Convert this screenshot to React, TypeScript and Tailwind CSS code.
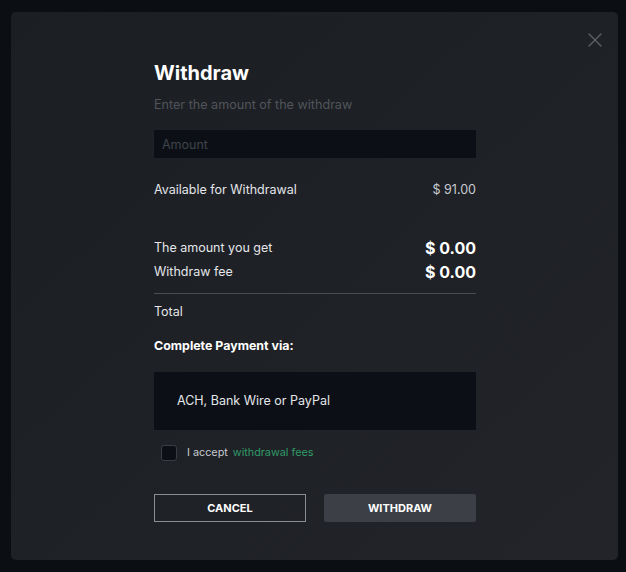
import { X } from "lucide-react";

const Row = ({ label, value, big }: { label: string; value: string; big?: boolean }) => (
  <div className="flex h-[20px] items-center justify-between">
    <span className="text-[12.5px] leading-[20px] text-[#e4e6ea]">{label}</span>
    <span className={big ? "text-[16px] font-bold leading-[20px] text-white" : "text-[12.5px] leading-[20px] text-[#c9ccd1]"}>
      {value}
    </span>
  </div>
);

export default function App() {
  return (
    <div
      className="min-h-[572px] w-full bg-[#0b0f14] pl-[11px] pr-[8px] pt-[12px] pb-[12px]"
      style={{ fontFamily: "Inter, Roboto, 'Liberation Sans', sans-serif" }}
    >
      <div className="relative h-[548px] rounded-[5px] bg-gradient-to-br from-[#1b1e22] to-[#222429]">
        <button className="absolute right-[11px] top-[16px] text-[#5c5f64]">
          <X className="size-[24px]" strokeWidth={1.4} />
        </button>

        <div className="ml-[143px] flex w-[322px] flex-col pt-[49px]">
          <h1 className="text-[20px] font-bold leading-[24px] text-white">Withdraw</h1>
          <p className="mt-[12px] text-[12.6px] leading-[16px] text-[#51555b]">Enter the amount of the withdraw</p>

          <input
            placeholder="Amount"
            className="mt-[17px] h-[28px] w-full bg-[#0c1016] px-[8px] text-[12.5px] text-white placeholder:text-[#3f434a] outline-none"
          />

          <div className="mt-[22px]">
            <Row label="Available for Withdrawal" value="$ 91.00" />
          </div>

          <div className="mt-[38px] flex flex-col gap-[4px]">
            <Row label="The amount you get" value="$ 0.00" big />
            <Row label="Withdraw fee" value="$ 0.00" big />
          </div>

          <div className="mt-[11px] h-px bg-[#4a4d52]" />

          <div className="mt-[8px] text-[12.5px] leading-[20px] text-[#e4e6ea]">Total</div>

          <div className="mt-[14px] text-[12.4px] font-bold leading-[20px] text-white">Complete Payment via:</div>

          <div className="mt-[16px] flex h-[58px] items-center bg-[#0c1016] px-[23px] text-[12.5px] text-[#e4e6ea]">
            ACH, Bank Wire or PayPal
          </div>

          <label className="mt-[15px] flex h-[16px] items-center gap-[10px] pl-[7px]">
            <span className="size-[16px] rounded-[3px] border border-[#3a3d43] bg-[#0c1016]" />
            <span className="text-[10.8px] leading-[16px] text-[#c9ccd1]">
              I accept <span className="ml-[2px] text-[#2f9a68]">withdrawal fees</span>
            </span>
          </label>

          <div className="mt-[33px] flex justify-between">
            <button className="h-[28px] w-[152px] border border-[#8a8d92] text-[11px] font-bold text-white">
              CANCEL
            </button>
            <button className="h-[28px] w-[152px] rounded-[2px] bg-[#3c3f46] text-[11px] font-bold text-white">
              WITHDRAW
            </button>
          </div>
        </div>
      </div>
    </div>
  );
}
